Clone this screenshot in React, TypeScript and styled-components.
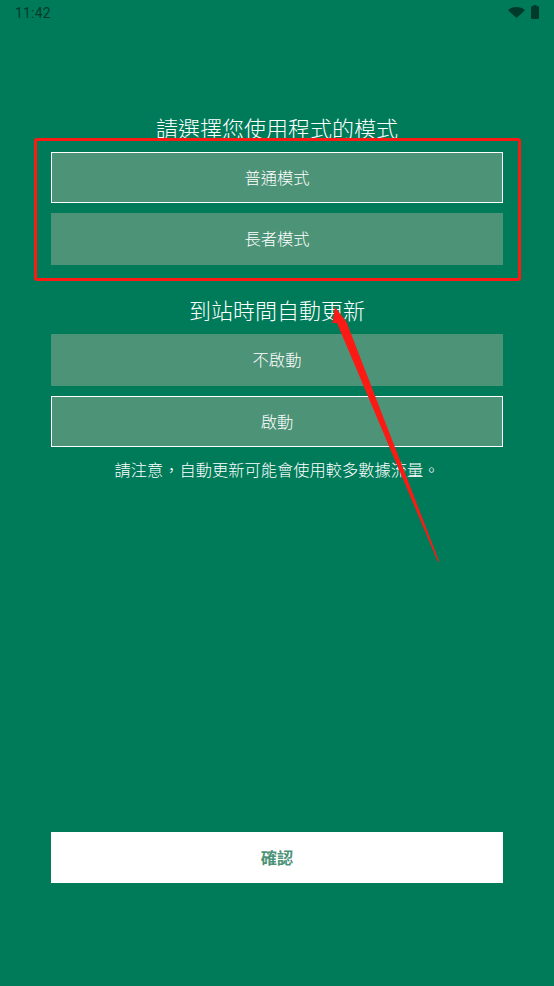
import styled, { createGlobalStyle } from "styled-components";

const GlobalStyle = createGlobalStyle`
  html, body {
    margin: 0;
    padding: 0;
    background: #007b5a;
  }
`;
const Page = styled.div`
  position: relative;
  width: 554px;
  height: 986px;
  overflow: hidden;
  display: flex;
  flex-direction: column;
  background-color: #007b5a;
  color: #ffffff;
  font-family: "Noto Sans CJK TC", "Noto Sans", sans-serif;
`;
const StatusBar = styled.div`
  height: 26px;
  display: flex;
  align-items: center;
  justify-content: space-between;
  padding: 0 15px;
  color: #003a2a;
`;
const Time = styled.span`
  font-family: Roboto, sans-serif;
  font-size: 13.8px;
  letter-spacing: 0.3px;
`;
const StatusIcons = styled.div`
  display: flex;
  align-items: center;
  gap: 6px;
  margin-bottom: 2px;
`;
const Content = styled.main`
  flex: 1;
  display: flex;
  flex-direction: column;
  padding: 86px 51px 103px;
`;
const Title = styled.h2<{ $top?: number }>`
  margin: ${(props) => props.$top ?? 0}px 0 10px;
  height: 30px;
  line-height: 30px;
  font-size: 22px;
  font-weight: 300;
  text-align: center;
`;
const Options = styled.div`
  display: flex;
  flex-direction: column;
  gap: 10px;
`;
const Option = styled.button<{ $selected?: boolean }>`
  box-sizing: border-box;
  width: 100%;
  height: ${(props) => (props.$selected ? 51 : 52)}px;
  padding: 0 0 2px;
  border: ${(props) => (props.$selected ? "1px solid #ffffff" : "none")};
  background-color: #4d9377;
  color: #ffffff;
  font-family: inherit;
  font-size: 16.3px;
  font-weight: 300;
  text-align: center;
`;
const Note = styled.p`
  margin: 10px 0 0;
  line-height: 24px;
  font-size: 16.25px;
  font-weight: 300;
  text-align: center;
`;
const Confirm = styled.button`
  margin-top: auto;
  width: 100%;
  height: 51px;
  padding: 0 0 2px;
  border: none;
  background-color: #ffffff;
  color: #4d9377;
  font-family: inherit;
  font-size: 16.3px;
  font-weight: 700;
`;
const Highlight = styled.div`
  position: absolute;
  left: 34px;
  top: 138px;
  width: 487px;
  height: 143px;
  box-sizing: border-box;
  border: 3px solid #fb1b14;
  border-radius: 3px;
`;
const Arrow = styled.svg`
  position: absolute;
  left: 0;
  top: 0;
`;

export default function App() {
  return (
    <Page>
      <GlobalStyle />
      <StatusBar>
        <Time>11:42</Time>
        <StatusIcons>
          <svg width="17" height="11" viewBox="0 0 17 11">
            <path d="M0 3.2C2.2 1.2 5.2 0 8.5 0s6.3 1.2 8.5 3.2L8.5 11z" fill="currentColor" />
          </svg>
          <svg width="8" height="14" viewBox="0 0 8 14">
            <path d="M2.5 0h3v1.2h1.6a.9.9 0 0 1 .9.9v11a.9.9 0 0 1-.9.9H.9a.9.9 0 0 1-.9-.9v-11a.9.9 0 0 1 .9-.9h1.6z" fill="currentColor" />
          </svg>
        </StatusIcons>
      </StatusBar>
      <Content>
        <Title>請選擇您使用程式的模式</Title>
        <Options>
          <Option $selected>普通模式</Option>
          <Option>長者模式</Option>
        </Options>
        <Title $top={29}>到站時間自動更新</Title>
        <Options>
          <Option>不啟動</Option>
          <Option $selected>啟動</Option>
        </Options>
        <Note>{"請注意\uFF0C自動更新可能會使用較多數據流量。"}</Note>
        <Confirm>確認</Confirm>
      </Content>
      <Highlight />
      <Arrow width="554" height="986" viewBox="0 0 554 986">
        <polygon points="335,307 346.5,322 439,561 438,562 337,323 332.5,323" fill="#fb1b14" />
      </Arrow>
    </Page>
  );
}
